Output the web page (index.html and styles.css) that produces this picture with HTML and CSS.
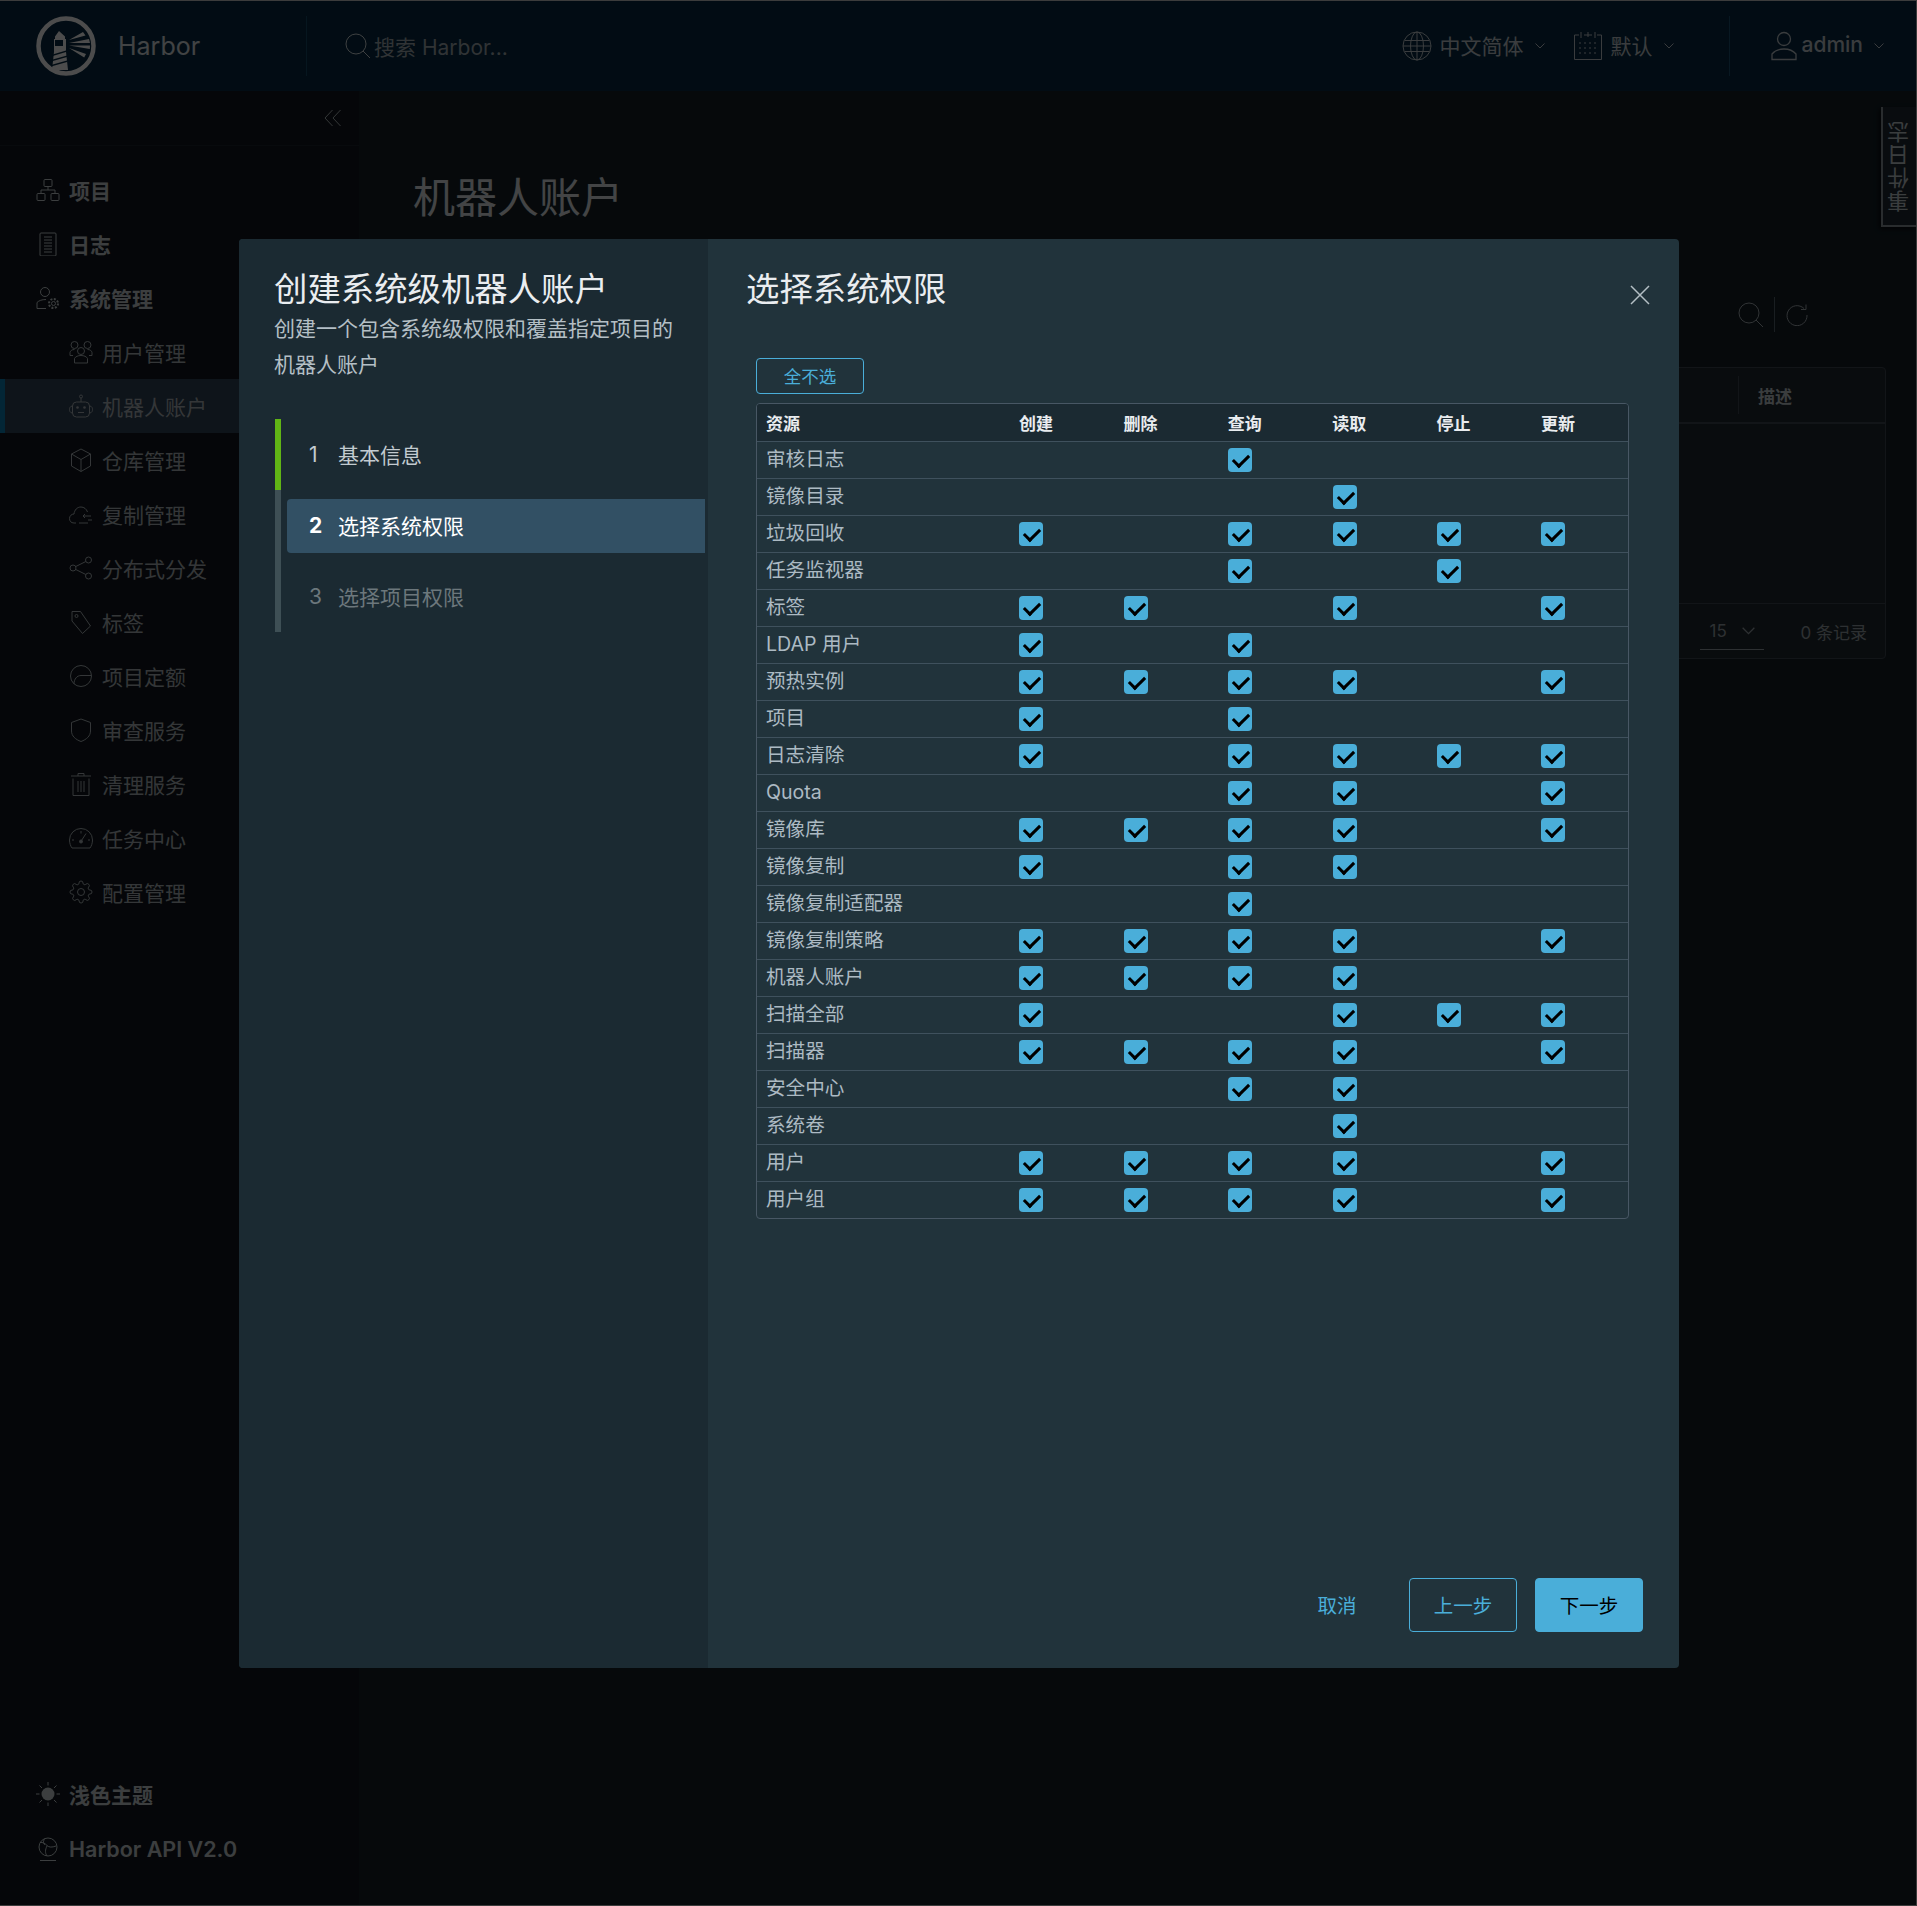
FILE: index.html
```html
<!DOCTYPE html>
<html lang="zh-CN">
<head>
    <meta charset="UTF-8">
    <meta name="viewport" content="width=device-width, initial-scale=1.0">
    <title>Harbor</title>
    <link rel="stylesheet" href="styles.css">
</head>
<body>
    <svg class="sprite" xmlns="http://www.w3.org/2000/svg">
        <symbol id="i-logo" viewBox="0 0 60 60">
            <circle cx="30" cy="30" r="27.5" fill="none" stroke="currentColor" stroke-width="4.5"/>
            <path fill="currentColor" fill-rule="evenodd" d="M23 15l6 5.500v2.500h1v13l2 18h-16l2-18v-13h1v-2.500zM19 24v6h8v-6z"/>
            <path fill="#072b43" d="M15 39l15-4.500v1.500l-15 4.500zM15 44l16-4.500v1.500l-16 4.500zM15 49l16-4.500v1.500l-16 4.500z"/>
            <path fill="currentColor" d="M33 24l14-8 2.500 3.500zM33 27l20-4 1 4zM33 29.500h21l-.2 3.500zM33 32l17 6-1.800 3.500z"/>
        </symbol>
        <symbol id="i-search" viewBox="0 0 26 26">
            <circle cx="11" cy="11" r="10" fill="none" stroke="currentColor"/>
            <path d="M18 18l7 7" fill="none" stroke="currentColor"/>
        </symbol>
        <symbol id="i-globe" viewBox="0 0 30 30">
            <g fill="none" stroke="currentColor">
                <circle cx="15" cy="15" r="14"/>
                <ellipse cx="15" cy="15" rx="6.500" ry="14"/>
                <path d="M15 1v28M2.500 9.500h25M2.500 20.500h25M1 15h28"/>
            </g>
        </symbol>
        <symbol id="i-calendar" viewBox="0 0 30 30">
            <g fill="none" stroke="currentColor">
                <path d="M6 4H1.500v24.500h27V4H24M11 4h8"/>
                <path d="M8 1v6M22 1v6M15 1v5"/>
                <path stroke-dasharray="2 3" d="M6 12h19M6 17h19M6 22h19"/>
            </g>
        </symbol>
        <symbol id="i-user" viewBox="0 0 26 30">
            <g fill="none" stroke="currentColor" stroke-width="1.300">
                <circle cx="13" cy="8" r="6.500"/>
                <path d="M1 28.500V23c3-3.500 7-5 12-5s9 1.500 12 5v5.500z"/>
            </g>
        </symbol>
        <symbol id="i-chevron" viewBox="0 0 10 6">
            <path d="M.5.500L5 5l4.500-4.500" fill="none" stroke="currentColor"/>
        </symbol>
        <symbol id="i-collapse" viewBox="0 0 18 18">
            <path d="M8.500 1L1 9l7.500 8M16.500 1L9 9l7.500 8" fill="none" stroke="currentColor"/>
        </symbol>
        <symbol id="i-org" viewBox="0 0 24 24">
            <g fill="none" stroke="currentColor">
                <rect x="8" y="1.500" width="8" height="7" rx="1"/>
                <rect x="1" y="15.500" width="8" height="7" rx="1"/>
                <rect x="15" y="15.500" width="8" height="7" rx="1"/>
                <path d="M12 8.500V12M5 15.500V12h14v3.500"/>
            </g>
        </symbol>
        <symbol id="i-log" viewBox="0 0 24 24">
            <g fill="none" stroke="currentColor">
                <rect x="4" y="1" width="16" height="23" rx="1"/>
                <path d="M8 5h8M8 8h8M8 11h8M8 14h8M8 17h8M8 20h8"/>
            </g>
        </symbol>
        <symbol id="i-admin" viewBox="0 0 24 24">
            <g fill="none" stroke="currentColor">
                <circle cx="9" cy="6" r="4.500"/>
                <path d="M10 13.500c-4 0-7 1-9 3v6h9"/>
                <circle cx="17.500" cy="17.500" r="2"/>
                <circle cx="17.500" cy="17.500" r="4.500" stroke-width="2" stroke-dasharray="2 1.500"/>
            </g>
        </symbol>
        <symbol id="i-users" viewBox="0 0 24 24">
            <g fill="none" stroke="currentColor">
                <circle cx="12" cy="11" r="3.500"/>
                <path d="M5.500 23v-4.500c1-2 3.500-3 6.500-3s5.500 1 6.500 3V23z"/>
                <circle cx="5.500" cy="5" r="3.500"/>
                <circle cx="18.500" cy="5" r="3.500"/>
                <path d="M4 15.500H1v-3c.5-2 2-3 4.500-3M20 15.500h3v-3c-.5-2-2-3-4.500-3"/>
            </g>
        </symbol>
        <symbol id="i-robot" viewBox="0 0 24 24">
            <g fill="none" stroke="currentColor">
                <circle cx="12" cy="2.500" r="1.500"/>
                <path d="M12 4v4"/>
                <rect x="3.500" y="8" width="17" height="15" rx="4"/>
                <path d="M3 12c-2 .5-2.500 2-2.500 3.500S1 18.500 3 19M21 12c2 .5 2.500 2 2.500 3.500S23 18.500 21 19"/>
                <path d="M9 18.500h6"/>
            </g>
            <circle cx="8.500" cy="13.500" r="1.300" fill="currentColor"/>
            <circle cx="15.500" cy="13.500" r="1.300" fill="currentColor"/>
        </symbol>
        <symbol id="i-box" viewBox="0 0 24 24">
            <path d="M12 1l9.500 5v12L12 23.500 2.500 18V6zM2.500 6L12 11.500 21.500 6M12 11.500v12" fill="none" stroke="currentColor"/>
        </symbol>
        <symbol id="i-cloud" viewBox="0 0 24 24">
            <path d="M7 21H5c-3 0-4.500-2-4.500-4.500S2.500 12 5 12c.5-4 3-7 7-7 3 0 5.500 2 6.500 5M19 21H10" fill="none" stroke="currentColor"/>
            <path d="M22 14h-8l2-2M14 14l2 2M23 18h-4" fill="none" stroke="currentColor"/>
        </symbol>
        <symbol id="i-share" viewBox="0 0 24 24">
            <g fill="none" stroke="currentColor">
                <circle cx="19.500" cy="4" r="3"/>
                <circle cx="19.500" cy="20" r="3"/>
                <circle cx="4" cy="12" r="3"/>
                <path d="M6.800 10.500l10-5M6.800 13.500l10 5"/>
            </g>
        </symbol>
        <symbol id="i-tag" viewBox="0 0 24 24">
            <g fill="none" stroke="currentColor">
                <path d="M3 1.500h8.500l10 14.500-8 7.500L3 11z"/>
                <circle cx="7.500" cy="6" r="1.500"/>
            </g>
        </symbol>
        <symbol id="i-pie" viewBox="0 0 24 24">
            <g fill="none" stroke="currentColor">
                <circle cx="12" cy="12" r="10.500"/>
                <path d="M5 20c0-5 3-8.500 7-8.500h10"/>
            </g>
        </symbol>
        <symbol id="i-shield" viewBox="0 0 24 24">
            <path d="M12 1l9.500 3.500V13c0 5-4 8.500-9.500 10.500C6.500 21.500 2.500 18 2.500 13V4.500z" fill="none" stroke="currentColor"/>
        </symbol>
        <symbol id="i-trash" viewBox="0 0 24 24">
            <path d="M2 4h20M9 4V1.500h6V4M4 6.500v17h16v-17M9 9v11M15 9v11M12 9v11" fill="none" stroke="currentColor"/>
        </symbol>
        <symbol id="i-gauge" viewBox="0 0 24 24">
            <g fill="none" stroke="currentColor">
                <path d="M3 22c-1.500-2-2.500-5-2.500-8a11.500 11.500 0 0 1 23 0c0 3-1 6-2.500 8z"/>
                <path d="M12 5v2.500M5 14H3M21 14h-2M17 7.500l-4.500 7"/>
                <circle cx="12" cy="15.500" r="1.500" fill="currentColor"/>
            </g>
        </symbol>
        <symbol id="i-gear" viewBox="0 0 24 24">
            <g fill="none" stroke="currentColor">
                <circle cx="12" cy="12" r="3.500"/>
                <path d="M19.400 15a1.650 1.650 0 0 0 .33 1.820l.06.06a2 2 0 0 1 0 2.830 2 2 0 0 1-2.830 0l-.06-.06a1.650 1.650 0 0 0-1.820-.33 1.650 1.650 0 0 0-1 1.510V21a2 2 0 0 1-2 2 2 2 0 0 1-2-2v-.09A1.650 1.650 0 0 0 9 19.400a1.650 1.650 0 0 0-1.820.33l-.06.06a2 2 0 0 1-2.830 0 2 2 0 0 1 0-2.830l.06-.06a1.650 1.650 0 0 0 .33-1.820 1.650 1.650 0 0 0-1.510-1H3a2 2 0 0 1-2-2 2 2 0 0 1 2-2h.09A1.650 1.650 0 0 0 4.600 9a1.650 1.650 0 0 0-.33-1.820l-.06-.06a2 2 0 0 1 0-2.830 2 2 0 0 1 2.830 0l.06.06a1.650 1.650 0 0 0 1.820.33H9a1.650 1.650 0 0 0 1-1.510V3a2 2 0 0 1 2-2 2 2 0 0 1 2 2v.09a1.650 1.650 0 0 0 1 1.510 1.650 1.650 0 0 0 1.820-.33l.06-.06a2 2 0 0 1 2.830 0 2 2 0 0 1 0 2.830l-.06.06a1.650 1.650 0 0 0-.33 1.820V9a1.650 1.650 0 0 0 1.510 1H21a2 2 0 0 1 2 2 2 2 0 0 1-2 2h-.09a1.650 1.650 0 0 0-1.510 1z"/>
            </g>
        </symbol>
        <symbol id="i-sun" viewBox="0 0 24 24">
            <circle cx="12" cy="12" r="6.500" fill="currentColor"/>
            <path d="M12 0v3.500M12 20.500V24M0 12h3.500M20.500 12H24M3.500 3.500L6 6M18 18l2.500 2.500M3.500 20.500L6 18M18 6l2.500-2.500" fill="none" stroke="currentColor"/>
        </symbol>
        <symbol id="i-api" viewBox="0 0 24 24">
            <g fill="none" stroke="currentColor">
                <circle cx="12" cy="10" r="9"/>
                <path d="M4 5.500c3-.5 5 1 7 3s5 2 9 .5M9 1.500C7 4 7 6 9 8M11 19c-2-3-2-6 0-10M4 23.500h16"/>
            </g>
        </symbol>
        <symbol id="i-refresh" viewBox="0 0 22 22">
            <path d="M18 4.500A10 10 0 1 0 21 11M20 .5v5h-5" fill="none" stroke="currentColor"/>
        </symbol>
        <symbol id="i-close" viewBox="0 0 20 20">
            <path d="M1 1l18 18M19 1L1 19" fill="none" stroke="currentColor" stroke-width="1.500"/>
        </symbol>
    </svg>

    <div class="app">
        <header class="topbar">
            <div class="brand">
                <svg class="brand-logo"><use href="#i-logo"/></svg>
                <span class="brand-name">Harbor</span>
            </div>
            <div class="search">
                <svg class="search-ico"><use href="#i-search"/></svg>
                <span>搜索 Harbor...</span>
            </div>
            <div class="top-actions">
                <div class="top-item">
                    <svg class="top-ico"><use href="#i-globe"/></svg>
                    <span>中文简体</span>
                    <svg class="chev"><use href="#i-chevron"/></svg>
                </div>
                <div class="top-item">
                    <svg class="top-ico"><use href="#i-calendar"/></svg>
                    <span>默认</span>
                    <svg class="chev"><use href="#i-chevron"/></svg>
                </div>
                <div class="top-item top-user">
                    <svg class="user-ico"><use href="#i-user"/></svg>
                    <span>admin</span>
                    <svg class="chev"><use href="#i-chevron"/></svg>
                </div>
            </div>
        </header>

        <div class="page">
            <aside class="sidebar">
                <div class="collapse-row"><svg class="collapse-ico"><use href="#i-collapse"/></svg></div>
                <nav class="nav">
                    <a class="nav-item top"><svg class="ico"><use href="#i-org"/></svg>项目</a>
                    <a class="nav-item top"><svg class="ico"><use href="#i-log"/></svg>日志</a>
                    <a class="nav-item top"><svg class="ico"><use href="#i-admin"/></svg>系统管理</a>
                    <a class="nav-item sub"><svg class="ico"><use href="#i-users"/></svg>用户管理</a>
                    <a class="nav-item sub active"><svg class="ico"><use href="#i-robot"/></svg>机器人账户</a>
                    <a class="nav-item sub"><svg class="ico"><use href="#i-box"/></svg>仓库管理</a>
                    <a class="nav-item sub"><svg class="ico"><use href="#i-cloud"/></svg>复制管理</a>
                    <a class="nav-item sub"><svg class="ico"><use href="#i-share"/></svg>分布式分发</a>
                    <a class="nav-item sub"><svg class="ico"><use href="#i-tag"/></svg>标签</a>
                    <a class="nav-item sub"><svg class="ico"><use href="#i-pie"/></svg>项目定额</a>
                    <a class="nav-item sub"><svg class="ico"><use href="#i-shield"/></svg>审查服务</a>
                    <a class="nav-item sub"><svg class="ico"><use href="#i-trash"/></svg>清理服务</a>
                    <a class="nav-item sub"><svg class="ico"><use href="#i-gauge"/></svg>任务中心</a>
                    <a class="nav-item sub"><svg class="ico"><use href="#i-gear"/></svg>配置管理</a>
                </nav>
                <div class="side-bottom">
                    <a class="nav-item top"><svg class="ico"><use href="#i-sun"/></svg>浅色主题</a>
                    <a class="nav-item top api"><svg class="ico"><use href="#i-api"/></svg>Harbor API V2.0</a>
                </div>
            </aside>

            <main class="content">
                <h1 class="page-title">机器人账户</h1>
                <div class="toolbar">
                    <svg class="tool-search"><use href="#i-search"/></svg>
                    <span class="tool-sep"></span>
                    <svg class="tool-refresh"><use href="#i-refresh"/></svg>
                </div>
                <div class="grid">
                    <div class="grid-head"><span class="grid-sep"></span><b>描述</b></div>
                    <div class="grid-body"></div>
                    <div class="grid-foot">
                        <div class="page-size"><span>15</span><svg class="chev-lg"><use href="#i-chevron"/></svg></div>
                        <span class="total">0 条记录</span>
                    </div>
                </div>
            </main>
        </div>
    </div>

    <div class="event-tab"><span>事件日志</span></div>
    <div class="scrim"></div>

    <section class="modal">
        <div class="modal-left">
            <h2 class="modal-title">创建系统级机器人账户</h2>
            <p class="modal-desc">创建一个包含系统级权限和覆盖指定项目的机器人账户</p>
            <ol class="steps">
                <li class="step done"><div class="step-btn"><span class="step-num">1</span>基本信息</div></li>
                <li class="step current"><div class="step-btn"><span class="step-num">2</span>选择系统权限</div></li>
                <li class="step"><div class="step-btn"><span class="step-num">3</span>选择项目权限</div></li>
            </ol>
        </div>
        <div class="modal-right">
            <h2 class="modal-title">选择系统权限</h2>
            <svg class="close"><use href="#i-close"/></svg>
            <div class="perm">
                <button class="btn btn-sm">全不选</button>
                <div class="table-wrap">
                    <table class="perm-table">
                        <thead>
                            <tr><th>资源</th><th>创建</th><th>删除</th><th>查询</th><th>读取</th><th>停止</th><th>更新</th></tr>
                        </thead>
                        <tbody>
                            <tr><td>审核日志</td><td></td><td></td><td><i class="cb"></i></td><td></td><td></td><td></td></tr>
                            <tr><td>镜像目录</td><td></td><td></td><td></td><td><i class="cb"></i></td><td></td><td></td></tr>
                            <tr><td>垃圾回收</td><td><i class="cb"></i></td><td></td><td><i class="cb"></i></td><td><i class="cb"></i></td><td><i class="cb"></i></td><td><i class="cb"></i></td></tr>
                            <tr><td>任务监视器</td><td></td><td></td><td><i class="cb"></i></td><td></td><td><i class="cb"></i></td><td></td></tr>
                            <tr><td>标签</td><td><i class="cb"></i></td><td><i class="cb"></i></td><td></td><td><i class="cb"></i></td><td></td><td><i class="cb"></i></td></tr>
                            <tr><td>LDAP 用户</td><td><i class="cb"></i></td><td></td><td><i class="cb"></i></td><td></td><td></td><td></td></tr>
                            <tr><td>预热实例</td><td><i class="cb"></i></td><td><i class="cb"></i></td><td><i class="cb"></i></td><td><i class="cb"></i></td><td></td><td><i class="cb"></i></td></tr>
                            <tr><td>项目</td><td><i class="cb"></i></td><td></td><td><i class="cb"></i></td><td></td><td></td><td></td></tr>
                            <tr><td>日志清除</td><td><i class="cb"></i></td><td></td><td><i class="cb"></i></td><td><i class="cb"></i></td><td><i class="cb"></i></td><td><i class="cb"></i></td></tr>
                            <tr><td>Quota</td><td></td><td></td><td><i class="cb"></i></td><td><i class="cb"></i></td><td></td><td><i class="cb"></i></td></tr>
                            <tr><td>镜像库</td><td><i class="cb"></i></td><td><i class="cb"></i></td><td><i class="cb"></i></td><td><i class="cb"></i></td><td></td><td><i class="cb"></i></td></tr>
                            <tr><td>镜像复制</td><td><i class="cb"></i></td><td></td><td><i class="cb"></i></td><td><i class="cb"></i></td><td></td><td></td></tr>
                            <tr><td>镜像复制适配器</td><td></td><td></td><td><i class="cb"></i></td><td></td><td></td><td></td></tr>
                            <tr><td>镜像复制策略</td><td><i class="cb"></i></td><td><i class="cb"></i></td><td><i class="cb"></i></td><td><i class="cb"></i></td><td></td><td><i class="cb"></i></td></tr>
                            <tr><td>机器人账户</td><td><i class="cb"></i></td><td><i class="cb"></i></td><td><i class="cb"></i></td><td><i class="cb"></i></td><td></td><td></td></tr>
                            <tr><td>扫描全部</td><td><i class="cb"></i></td><td></td><td></td><td><i class="cb"></i></td><td><i class="cb"></i></td><td><i class="cb"></i></td></tr>
                            <tr><td>扫描器</td><td><i class="cb"></i></td><td><i class="cb"></i></td><td><i class="cb"></i></td><td><i class="cb"></i></td><td></td><td><i class="cb"></i></td></tr>
                            <tr><td>安全中心</td><td></td><td></td><td><i class="cb"></i></td><td><i class="cb"></i></td><td></td><td></td></tr>
                            <tr><td>系统卷</td><td></td><td></td><td></td><td><i class="cb"></i></td><td></td><td></td></tr>
                            <tr><td>用户</td><td><i class="cb"></i></td><td><i class="cb"></i></td><td><i class="cb"></i></td><td><i class="cb"></i></td><td></td><td><i class="cb"></i></td></tr>
                            <tr><td>用户组</td><td><i class="cb"></i></td><td><i class="cb"></i></td><td><i class="cb"></i></td><td><i class="cb"></i></td><td></td><td><i class="cb"></i></td></tr>
                        </tbody>
                    </table>
                </div>
            </div>
            <div class="modal-foot">
                <button class="btn btn-link">取消</button>
                <button class="btn">上一步</button>
                <button class="btn btn-primary">下一步</button>
            </div>
        </div>
    </section>
</body>
</html>
```

FILE: styles.css
```css
* {
    box-sizing: border-box;
}

html, body {
    margin: 0;
    padding: 0;
    height: 100%;
}

body {
    position: relative;
    min-height: 1906px;
    background: #141f27;
    color: #dfe5e8;
    font-family: Inter, "Noto Sans CJK SC", sans-serif;
    font-size: 21px;
    overflow: hidden;
}

.sprite {
    display: none;
}

.app {
    display: flex;
    flex-direction: column;
    height: 1906px;
}

/* top bar */
.topbar {
    flex: none;
    height: 91px;
    display: flex;
    align-items: center;
    background: #072b43;
    color: #c2cad0;
}

.brand {
    width: 307px;
    height: 60px;
    display: flex;
    align-items: center;
    padding-left: 36px;
    border-right: 1px solid #164a68;
}

.brand-logo {
    width: 60px;
    height: 60px;
    color: #fff;
}

.brand-name {
    margin-left: 22px;
    font-size: 25px;
    color: #fff;
    opacity: .85;
}

.search {
    display: flex;
    align-items: center;
    margin-left: 38px;
    font-size: 21px;
    color: #a0aab1;
}

.search-ico {
    width: 26px;
    height: 26px;
    margin-right: 3px;
    color: #d0d7db;
}

.top-actions {
    margin-left: auto;
    display: flex;
    align-items: center;
    height: 60px;
    padding-right: 33px;
}

.top-item {
    display: flex;
    align-items: center;
    margin-right: 28px;
}

.top-item span {
    padding-bottom: 2px;
}

.top-ico {
    width: 30px;
    height: 30px;
    margin-right: 8px;
}

.user-ico {
    width: 26px;
    height: 30px;
    margin-right: 5px;
}

.chev {
    width: 10px;
    height: 6px;
    margin-left: 11px;
}

.top-user {
    height: 60px;
    margin: 0 0 0 27px;
    padding-left: 41px;
    border-left: 1px solid #1c5272;
}

.top-user span {
    font-weight: 500;
}

/* sidebar */
.page {
    flex: 1;
    display: flex;
    min-height: 0;
}

.sidebar {
    flex: none;
    width: 359px;
    display: flex;
    flex-direction: column;
    background: #11171e;
    color: #aeb6bb;
}

.collapse-row {
    height: 55px;
    display: flex;
    align-items: center;
    justify-content: flex-end;
    padding-right: 17px;
    border-bottom: 1px solid #1c242c;
}

.collapse-ico {
    width: 18px;
    height: 18px;
}

.nav {
    padding-top: 17px;
}

.nav-item {
    height: 54px;
    display: flex;
    align-items: center;
}

.nav-item.top {
    padding-left: 36px;
    font-weight: 700;
    color: #c9d0d4;
}

.nav-item.sub {
    padding-left: 69px;
}

.nav-item.active {
    background: #2f4357;
    box-shadow: inset 5px 0 0 #0a7fb5;
}

.ico {
    flex: none;
    width: 24px;
    height: 24px;
    margin-right: 9px;
}

.side-bottom {
    margin-top: auto;
    padding-bottom: 30px;
}

.side-bottom .nav-item:first-child {
    padding-bottom: 2px;
}

.nav-item.api {
    font-size: 21.500px;
    font-weight: 600;
}

/* page behind the modal */
.content {
    flex: 1;
    padding: 80px 31px 0 54px;
}

.page-title {
    margin: 0;
    font-size: 42px;
    font-weight: 400;
    line-height: 54px;
}

.toolbar {
    display: flex;
    align-items: center;
    justify-content: flex-end;
    height: 35px;
    margin-top: 72px;
    padding-right: 78px;
    color: #a4adb3;
}

.tool-search {
    width: 26px;
    height: 26px;
}

.tool-sep {
    width: 1px;
    height: 35px;
    margin: 0 11px 0 10px;
    background: #566470;
}

.tool-refresh {
    width: 22px;
    height: 22px;
}

.grid {
    margin-top: 35px;
    height: 292px;
    display: flex;
    flex-direction: column;
    border: 1px solid #3c4853;
    border-radius: 4px;
    background: #21292f;
}

.grid-head {
    height: 56px;
    display: flex;
    align-items: center;
    justify-content: flex-end;
    padding-right: 93px;
    border-bottom: 2px solid #3c4853;
    font-size: 17px;
    color: #c3cbd0;
}

.grid-sep {
    width: 1px;
    height: 38px;
    margin-right: 19px;
    background: #3c4853;
}

.grid-body {
    flex: 1;
}

.grid-foot {
    height: 55px;
    display: flex;
    align-items: center;
    justify-content: flex-end;
    padding-right: 18px;
    border-top: 1px solid #3c4853;
    font-size: 17px;
    color: #98a2a8;
}

.page-size {
    width: 64px;
    height: 38px;
    display: flex;
    align-items: center;
    justify-content: space-between;
    padding: 0 9px 0 9px;
    border-bottom: 1px solid #98a2a8;
}

.chev-lg {
    width: 13px;
    height: 8px;
}

.total {
    margin-left: 36px;
}

/* event log tab on the right edge */
.event-tab {
    position: absolute;
    top: 107px;
    right: 0;
    width: 36px;
    height: 120px;
    display: flex;
    align-items: center;
    justify-content: center;
    background: #1e2b35;
    border-left: 2px solid #8a949a;
    border-bottom: 2px solid #8a949a;
    box-shadow: -2px 2px 4px rgba(0, 0, 0, .6);
    color: #c4ccd1;
    font-size: 22px;
}

.event-tab span {
    writing-mode: vertical-rl;
    transform: rotate(180deg);
    letter-spacing: 1px;
}

.scrim {
    position: absolute;
    inset: 0;
    background: rgba(0, 0, 0, .7);
    border: 1px solid #3c3c3c;
    border-left: 0;
}

/* modal */
.modal {
    position: absolute;
    top: 239px;
    left: 239px;
    width: 1440px;
    height: 1429px;
    display: flex;
    border-radius: 4px;
    overflow: hidden;
    background: #21333b;
}

.modal-left {
    flex: none;
    width: 469px;
    padding: 27px 20px 0 35px;
    background: #1b2a32;
}

.modal-title {
    margin: 0;
    font-size: 33.400px;
    font-weight: 400;
    line-height: 46px;
    color: #eaedf0;
}

.modal-desc {
    margin: -1px 0 0;
    font-size: 21px;
    line-height: 36px;
    color: #b4bfc5;
}

.steps {
    list-style: none;
    margin: 36px -17px 0 1px;
    padding: 0;
}

.step {
    height: 71px;
    padding: 9px 0 0 6px;
    border-left: 6px solid #3e4f55;
    color: #6c777c;
}

.step.done {
    border-left-color: #60b515;
    color: #c2cbd0;
}

.step-btn {
    height: 54px;
    display: flex;
    align-items: center;
    padding: 0 0 2px 22px;
    border-radius: 4px 0 0 4px;
}

.step-num {
    width: 29px;
}

.step.current .step-btn {
    background: #325064;
    color: #fff;
}

.step.current .step-num {
    font-weight: 700;
}

.modal-right {
    position: relative;
    flex: 1;
    display: flex;
    flex-direction: column;
    padding: 27px 36px 36px 38px;
}

.close {
    position: absolute;
    top: 46px;
    right: 29px;
    width: 20px;
    height: 20px;
    color: #b4bfc5;
}

.perm {
    margin: 46px 14px 0 10px;
}

.btn {
    width: 108px;
    height: 54px;
    border: 1px solid #4aaed9;
    border-radius: 4px;
    background: transparent;
    color: #4aaed9;
    font-family: inherit;
    font-size: 19.500px;
    padding: 0 0 2px;
}

.btn-sm {
    display: block;
    height: 36px;
    font-size: 17.500px;
}

.btn-link {
    border-color: transparent;
}

.btn-primary {
    background: #4aaed9;
    color: #000;
}

.table-wrap {
    margin-top: 9px;
    border: 1px solid #485764;
    border-radius: 4px;
    overflow: hidden;
}

.perm-table {
    width: 100%;
    border-collapse: collapse;
    table-layout: fixed;
}

.perm-table th {
    height: 37px;
    padding: 0 0 0 9px;
    background: #1b2a32;
    color: #e9ecef;
    font-size: 17px;
    font-weight: 700;
    text-align: left;
}

.perm-table th:first-child,
.perm-table td:first-child {
    width: 253px;
}

.perm-table th:nth-child(n+2):nth-child(-n+6) {
    width: 104.400px;
}

.perm-table td {
    height: 37px;
    padding: 0 0 0 9px;
    border-top: 1px solid #3f515d;
    color: #acbac3;
    font-size: 19.600px;
    line-height: 1;
    vertical-align: middle;
}

.perm-table td:nth-child(3) .cb,
.perm-table td:nth-child(5) .cb {
    margin-left: 1px;
}

.cb {
    position: relative;
    display: block;
    width: 24px;
    height: 24px;
    border-radius: 4px;
    background: #4aaed9;
}

.cb::after {
    content: "";
    position: absolute;
    left: 5px;
    top: 6px;
    width: 13px;
    height: 7px;
    border-left: 3.500px solid #000;
    border-bottom: 3.500px solid #000;
    transform: rotate(-45deg);
}

.modal-foot {
    margin-top: auto;
    display: flex;
    justify-content: flex-end;
    gap: 18px;
}
```
